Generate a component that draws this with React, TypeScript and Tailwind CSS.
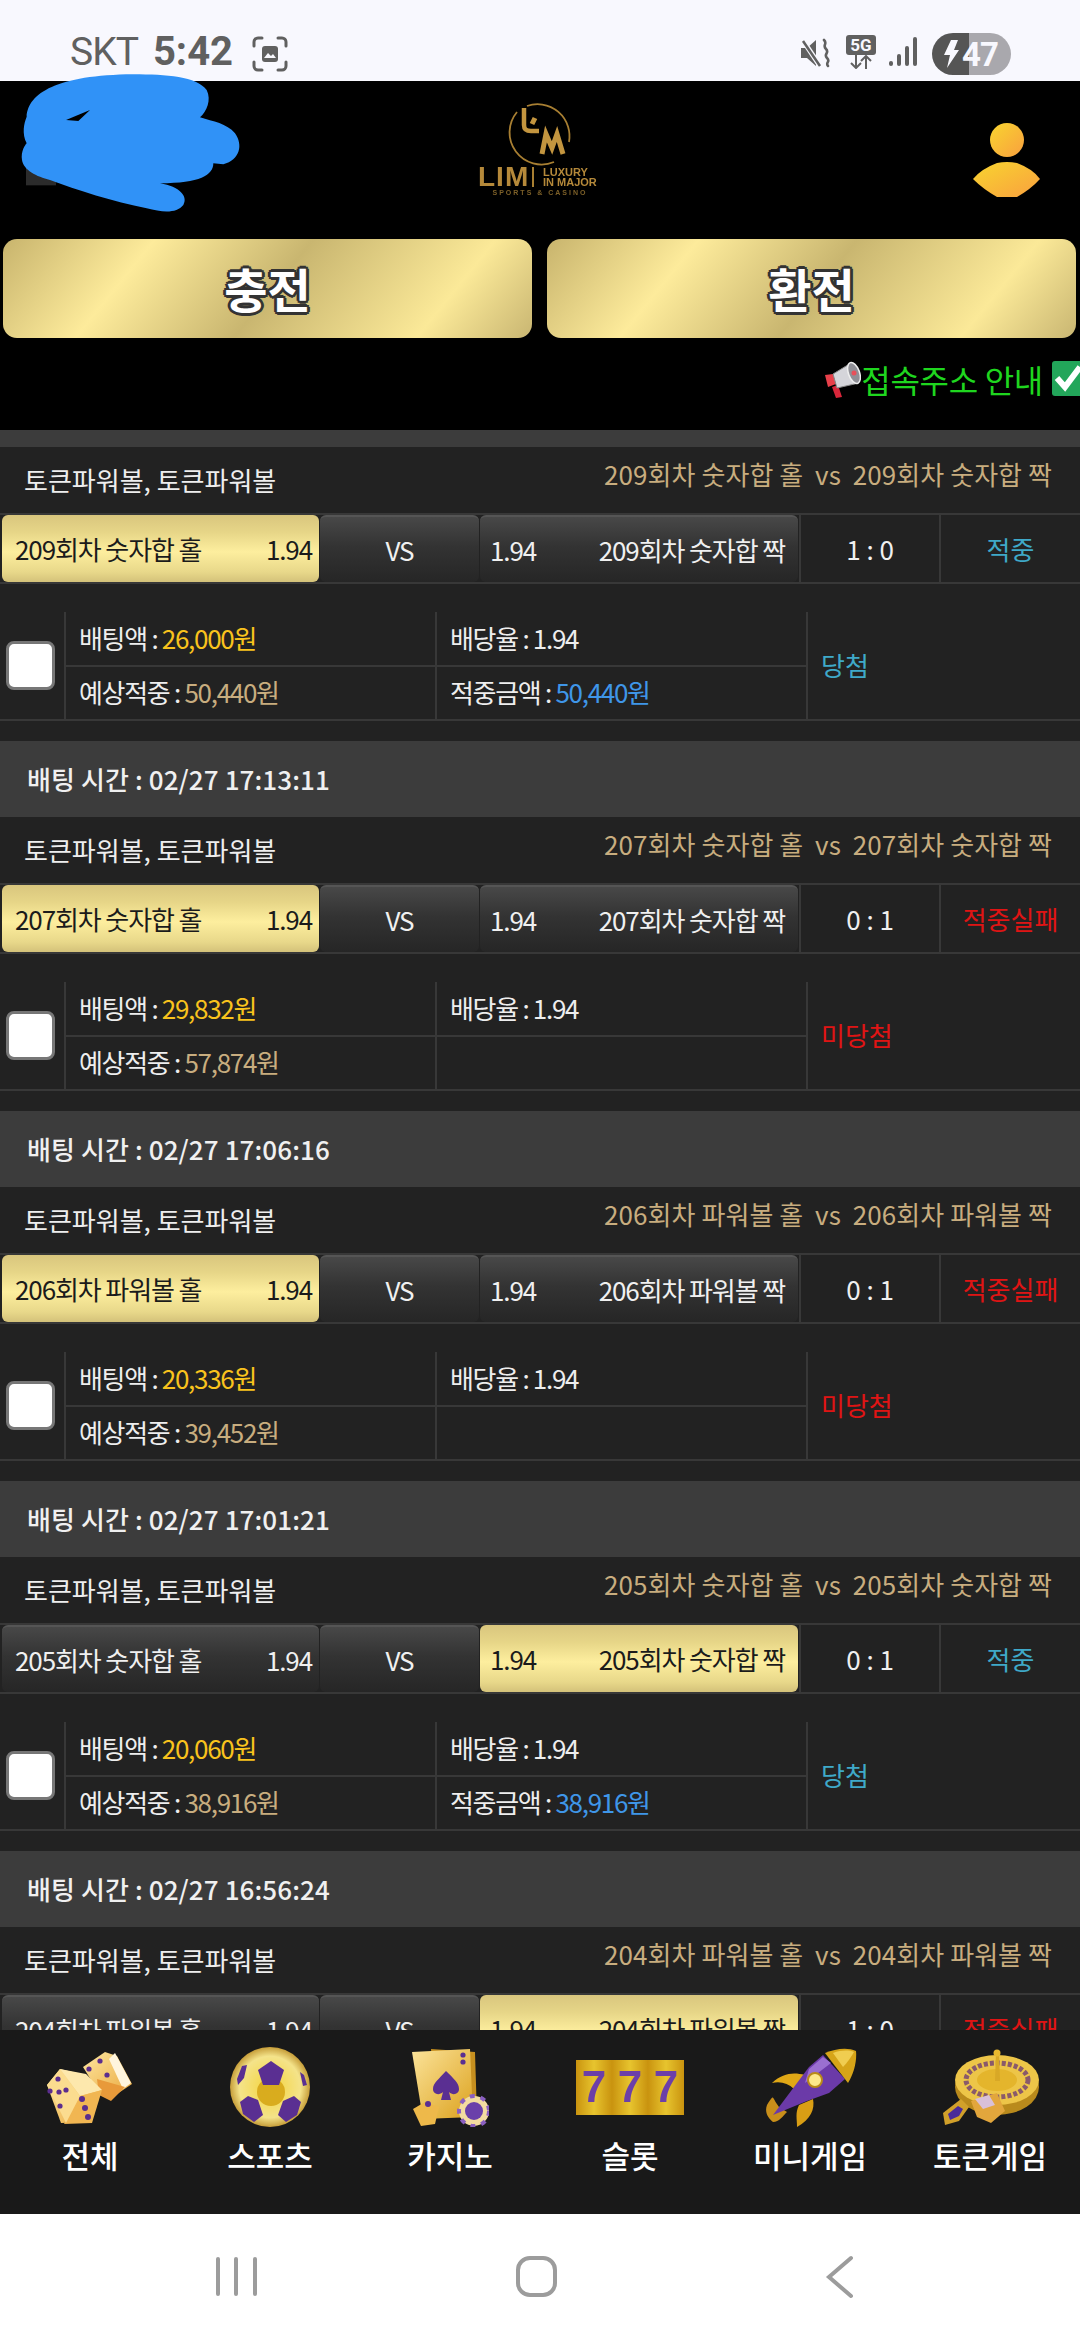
import React from "react";

type Card = {
  time?: string;
  no: number;
  kind: string;
  pick: "left" | "right";
  score: string;
  win: boolean;
  bet: string;
  exp: string;
  won?: string;
};

const cards: Card[] = [
  { no: 209, kind: "숫자합", pick: "left", score: "1 : 0", win: true, bet: "26,000원", exp: "50,440원", won: "50,440원" },
  { time: "02/27 17:13:11", no: 207, kind: "숫자합", pick: "left", score: "0 : 1", win: false, bet: "29,832원", exp: "57,874원" },
  { time: "02/27 17:06:16", no: 206, kind: "파워볼", pick: "left", score: "0 : 1", win: false, bet: "20,336원", exp: "39,452원" },
  { time: "02/27 17:01:21", no: 205, kind: "숫자합", pick: "right", score: "0 : 1", win: true, bet: "20,060원", exp: "38,916원", won: "38,916원" },
  { time: "02/27 16:56:24", no: 204, kind: "파워볼", pick: "right", score: "1 : 0", win: false, bet: "20,000원", exp: "38,800원" },
];

const gold = "bg-[linear-gradient(180deg,#d9c67e_0%,#e6d587_25%,#fdee9e_55%,#e8d88a_85%,#d4c27a_100%)] text-[#1b1b1b]";
const dark = "bg-[linear-gradient(180deg,#484848_0%,#333333_45%,#262626_100%)] border-t-2 border-[#555555] text-[#f0f0f0]";
const goldBtn = "bg-[linear-gradient(129deg,#c8b46d_0%,#fdeb9b_25%,#c9b670_51%,#fbe998_81%,#c9b672_100%)]";
const outlined = "[text-shadow:-2px_-2px_0_#333,2px_-2px_0_#333,-2px_2px_0_#333,2px_2px_0_#333,0_3px_0_#333,3px_0_0_#333,-3px_0_0_#333,0_-3px_0_#333]";

function StatusBar() {
  return (
    <div className="h-[81px] shrink-0 bg-[#f8f8fe] flex items-start pt-[24px] pl-[70px] pr-[69px] text-[#606060] font-['Roboto',sans-serif]">
      <span className="text-[39px] leading-[56px] tracking-[-1px] mr-[15px]">SKT</span>
      <span className="text-[40px] leading-[56px] font-bold mr-[19px]">5:42</span>
      <svg width="36" height="36" viewBox="0 0 36 36" className="mt-[12px]" fill="none" stroke="#606060" strokeWidth="3" strokeLinecap="round">
        <path d="M2 10V6a4 4 0 0 1 4-4h4M26 2h4a4 4 0 0 1 4 4v4M34 26v4a4 4 0 0 1-4 4h-4M10 34H6a4 4 0 0 1-4-4v-4" />
        <rect x="10" y="10" width="16" height="16" rx="3" fill="#606060" stroke="none" />
        <path d="M12 22l4-5 3 3 2-2 3 4z" fill="#f8f8fe" stroke="none" />
      </svg>
      <div className="ml-auto flex items-start">
        <svg width="30" height="30" viewBox="0 0 30 30" className="mt-[14px] mr-[16px]" fill="#606060">
          <path d="M1 10h6l9-8v26l-9-8H1z" />
          <path d="M2 1l18 27" stroke="#f8f8fe" strokeWidth="5" />
          <path d="M3 3l17 25" stroke="#606060" strokeWidth="2.5" />
          <path d="M24 2c4 4-2 5 2 9s-3 5 1 9-2 4 1 8" fill="none" stroke="#606060" strokeWidth="2.6" strokeLinecap="round" />
        </svg>
        <div className="w-[30px] mt-[11px] mr-[13px] flex flex-col items-center">
          <div className="w-[30px] h-[20px] rounded-[3px] bg-[#606060] text-[#f8f8fe] text-[17px] font-bold leading-[20px] text-center">5G</div>
          <svg width="24" height="14" viewBox="0 0 24 14" fill="none" stroke="#606060" strokeWidth="2">
            <path d="M7 0v13M2 8l5 5 5-5M17 14V1M12 6l5-5 5 5" />
          </svg>
        </div>
        <svg width="28" height="30" viewBox="0 0 28 30" className="mt-[13px] mr-[15px]" fill="#606060">
          <rect x="0" y="24" width="4" height="5" rx="2" />
          <rect x="8" y="17" width="4" height="12" rx="2" />
          <rect x="16" y="9" width="4" height="20" rx="2" />
          <rect x="24" y="0" width="4" height="29" rx="2" />
        </svg>
        <div className="w-[79px] h-[42px] mt-[9px] rounded-full overflow-hidden flex bg-[linear-gradient(90deg,#555555_0%,#555555_47%,#a9a8ad_47%,#a9a8ad_100%)] items-center">
          <svg width="16" height="28" viewBox="0 0 16 28" className="ml-[11px] mr-[3px]" fill="#f8f8fe">
            <path d="M8 0h7l-4 10h5L4 28l3-13H1z" />
          </svg>
          <span className="text-[#f8f8fe] font-bold text-[33px] leading-none tracking-[-1px]">47</span>
        </div>
      </div>
    </div>
  );
}

function Logo() {
  return (
    <div className="w-[124px] h-[108px] flex flex-col items-center text-[#b5893a] blur-[0.6px] font-['Liberation_Sans',sans-serif]">
      <svg width="70" height="68" viewBox="0 0 70 68" fill="none" className="shrink-0">
        <path d="M12 12A32 32 0 0 0 49 62" stroke="#a87f32" strokeWidth="1.8" />
        <path d="M22 6A32 32 0 0 1 64 42" stroke="#a87f32" strokeWidth="1.8" />
        <path d="M19 8v17c0 5 3 6 7 6h8" stroke="#c3953f" strokeWidth="4.5" />
        <path d="M27 24l3-6M37 54l4-20 6 14 5-14 6 20" stroke="#c3953f" strokeWidth="5" />
      </svg>
      <div className="w-full flex items-center -mt-[2px]">
        <span className="text-[28px] font-bold leading-[22px] tracking-[1px] w-[49px]">LIM</span>
        <span className="w-[2px] h-[20px] bg-[#a87f32] ml-[5px] mr-[9px]" />
        <div className="flex flex-col font-bold text-[11px] leading-[10px] whitespace-nowrap">
          <span>LUXURY</span>
          <span>IN MAJOR</span>
        </div>
      </div>
      <span className="text-[7px] font-bold leading-[10px] tracking-[2px] text-[#7d6028] whitespace-nowrap">SPORTS &amp; CASINO</span>
    </div>
  );
}

function Person() {
  return (
    <svg width="68" height="76" viewBox="0 0 68 76" className="mt-[42px]">
      <defs>
        <linearGradient id="pg" x1="0" y1="0" x2="1" y2="1">
          <stop offset="0" stopColor="#f8d52f" />
          <stop offset="1" stopColor="#f9a03f" />
        </linearGradient>
      </defs>
      <circle cx="34" cy="17" r="17" fill="url(#pg)" />
      <path d="M0 56Q8 46 24 40Q34 38 44 40Q60 46 67 56Q58 66 44 74H24Q10 66 0 56z" fill="url(#pg)" />
    </svg>
  );
}

function Header() {
  return (
    <div className="h-[349px] shrink-0 bg-black flex flex-col">
      <div className="h-[158px] grid grid-cols-[1fr_auto_1fr]">
        <div />
        <div className="pt-[19px]">
          <Logo />
        </div>
        <div className="flex justify-end items-start pr-[39px]">
          <Person />
        </div>
      </div>
      <div className="flex gap-[15px] pl-[3px] pr-[4px] h-[99px]">
        <div className={`flex-1 rounded-[14px] flex items-center justify-center text-white text-[47px] font-bold ${outlined} ${goldBtn}`}>충전</div>
        <div className={`flex-1 rounded-[14px] flex items-center justify-center text-white text-[47px] font-bold ${outlined} ${goldBtn}`}>환전</div>
      </div>
      <div className="flex items-start justify-end pt-[23px] overflow-hidden">
        <svg width="38" height="38" viewBox="0 0 38 38" className="shrink-0">
          <path d="M2 14l8-1 3 10-8 3z" fill="#e8404a" />
          <path d="M9 26l6-2 4 12-6 1z" fill="#d8263a" />
          <path d="M10 13L28 2l8 20-22 5z" fill="#d5d5da" stroke="#888" strokeWidth="1" />
          <ellipse cx="31" cy="12" rx="5.5" ry="11" transform="rotate(-20 31 12)" fill="#8f8f96" stroke="#eee" strokeWidth="1.5" />
          <circle cx="31" cy="12" r="2.5" fill="#e8505a" />
        </svg>
        <span className="text-[32px] leading-[42px] -mt-[3px] text-[#1fd61f] tracking-[-0.3px] whitespace-nowrap mr-[9px]">접속주소 안내</span>
        <svg width="28" height="35" viewBox="0 0 28 35" className="shrink-0">
          <rect x="0" y="0" width="36" height="35" rx="3" fill="#22a65a" />
          <path d="M5 17l8 9 15-20" fill="none" stroke="#fff" strokeWidth="6" />
        </svg>
      </div>
    </div>
  );
}

function Row({ c }: { c: Card }) {
  const left = `${c.no}회차 ${c.kind} 홀`;
  const right = `${c.no}회차 ${c.kind} 짝`;
  return (
    <div className="shrink-0">
      {c.time ? (
        <div className="h-[76px] bg-[#3c3c3c] pl-[27px] pb-[2px] flex items-center text-[26px] tracking-[0.1px] text-[#f0f0f0] font-medium">
          배팅 시간 : {c.time}
        </div>
      ) : (
        <div className="h-[17px] bg-[#3c3c3c]" />
      )}
      <div className="bg-[#222222]">
        <div className="h-[66px] flex justify-between items-start pl-[24px] pr-[28px] text-[26px] leading-none whitespace-pre">
          <span className="pt-[20px] text-[#eeeeee]">토큰파워볼, 토큰파워볼</span>
          <span className="pt-[14px] tracking-[0.07px] text-[#c8ad7f]">{left}  vs  {right}</span>
        </div>
        <div className="h-[71px] border-y-2 border-[#383838] flex text-[26px] tracking-[-1.1px] whitespace-nowrap">
          <div className={`ml-[2px] w-[317px] rounded-[6px] flex items-center justify-between pl-[13px] pr-[7px] ${c.pick === "left" ? gold : dark}`}>
            <span>{left}</span>
            <span>1.94</span>
          </div>
          <div className={`ml-[1px] w-[159px] rounded-[6px] flex items-center justify-center ${dark}`}>VS</div>
          <div className={`ml-[1px] w-[318px] rounded-[6px] flex items-center justify-between pl-[10px] pr-[13px] ${c.pick === "right" ? gold : dark}`}>
            <span>1.94</span>
            <span>{right}</span>
          </div>
          <div className="ml-[1px] w-[142px] border-x-2 border-[#383838] flex items-center justify-center text-[#f0f0f0] tracking-normal">{c.score}</div>
          <div className={`flex-1 flex items-center justify-center tracking-normal ${c.win ? "text-[#3fa9c9]" : "text-[#e01414]"}`}>
            {c.win ? "적중" : "적중실패"}
          </div>
        </div>
        <div className="pt-[28px] pb-[20px]">
          <div className="h-[109px] border-b-2 border-[#383838] flex text-[26px] tracking-[-1.3px] text-[#eeeeee] whitespace-nowrap">
            <div className="w-[64px] flex items-center pl-[6px]">
              <div className="w-[49px] h-[49px] rounded-[8px] bg-white border-[3px] border-[#777777]" />
            </div>
            <div className="w-[371px] border-l-2 border-[#383838] flex flex-col">
              <div className="h-[53px] pb-[2px] flex items-center pl-[13px]">
                <span>배팅액 : <span className="text-[#f9c31d]">{c.bet}</span></span>
              </div>
              <div className="flex-1 pb-[3px] border-t-2 border-[#383838] flex items-center pl-[13px]">
                <span>예상적중 : <span className="text-[#c8ad7f]">{c.exp}</span></span>
              </div>
            </div>
            <div className="w-[371px] border-l-2 border-[#383838] flex flex-col">
              <div className="h-[53px] pb-[2px] flex items-center pl-[13px]">배당율 : 1.94</div>
              <div className="flex-1 pb-[3px] border-t-2 border-[#383838] flex items-center pl-[13px]">
                {c.won && (
                  <span>적중금액 : <span className="text-[#3f96e8]">{c.won}</span></span>
                )}
              </div>
            </div>
            <div className={`flex-1 pb-[2px] border-l-2 border-[#383838] flex items-center pl-[13px] tracking-normal ${c.win ? "text-[#3fa9c9]" : "text-[#e01414]"}`}>
              {c.win ? "당첨" : "미당첨"}
            </div>
          </div>
        </div>
      </div>
    </div>
  );
}

function Dice() {
  const dot = "#5b2d8e";
  return (
    <svg width="90" height="76" viewBox="0 0 90 76" className="blur-[0.6px]">
      <defs>
        <linearGradient id="d1" x1="0" y1="0" x2="1" y2="1">
          <stop offset="0" stopColor="#fde7a0" />
          <stop offset="1" stopColor="#eaa93f" />
        </linearGradient>
      </defs>
      <path d="M38 18L60 3l12 4 15 28-18 12-18-8z" fill="url(#d1)" />
      <path d="M70 4l16 30-8 6-14-30z" fill="#fff5dd" />
      <path d="M52 30l28 8-14 14-12-6z" fill="#e89a3a" />
      <circle cx="55" cy="12" r="2.6" fill={dot} /><circle cx="44" cy="20" r="2.6" fill={dot} /><circle cx="62" cy="26" r="2.6" fill={dot} />
      <path d="M2 36L15 20l25 6 16 16-10 31-30 1z" fill="url(#d1)" />
      <path d="M15 20l26 5 16 16-22 6z" fill="#fde8ad" />
      <path d="M35 47l22-6-10 33-28 1z" fill="#f1b652" />
      <path d="M2 36L15 20l20 27-14 27z" fill="#fbdc8f" />
      <circle cx="13" cy="30" r="2.6" fill={dot} /><circle cx="5" cy="42" r="2.6" fill={dot} /><circle cx="14" cy="43" r="2.6" fill={dot} />
      <circle cx="21" cy="41" r="2.6" fill={dot} /><circle cx="15" cy="57" r="2.6" fill={dot} />
      <circle cx="37" cy="50" r="3" fill={dot} /><circle cx="40" cy="59" r="3" fill={dot} /><circle cx="43" cy="68" r="3" fill={dot} />
    </svg>
  );
}

function Ball() {
  const p = "#5a2f92";
  return (
    <svg width="82" height="82" viewBox="0 0 82 82" className="blur-[0.5px]">
      <defs>
        <radialGradient id="b1" cx="0.5" cy="0.5" r="0.55">
          <stop offset="0" stopColor="#f4d43a" />
          <stop offset="0.7" stopColor="#f4e38a" />
          <stop offset="1" stopColor="#b27f16" />
        </radialGradient>
      </defs>
      <circle cx="41" cy="41" r="40" fill="url(#b1)" />
      <circle cx="42" cy="46" r="14" fill="#d9ac1e" />
      <path d="M42 15l13 9-5 15H34l-5-15z" fill={p} />
      <path d="M19 50l10 4 5 15-9 7-11-8-3-12z" fill={p} />
      <path d="M65 50l-11 5-5 14 8 7 11-7 4-13z" fill={p} />
      <path d="M13 20l-5 13 1 6 6-7 3-13z" fill={p} />
      <path d="M71 26l3 14 4-1-3-10z" fill={p} />
    </svg>
  );
}

function Cards() {
  return (
    <svg width="78" height="80" viewBox="0 0 78 80" className="blur-[0.5px]">
      <defs>
        <linearGradient id="c1" x1="0" y1="0" x2="1" y2="1">
          <stop offset="0" stopColor="#fbe39a" />
          <stop offset="1" stopColor="#dca21e" />
        </linearGradient>
      </defs>
      <path d="M20 2l44 3 2 65-40-2z" fill="#c68f1f" />
      <path d="M1 5l58-3 3 68-50 2z" fill="url(#c1)" />
      <path d="M35 24c8 8 13 12 13 18 0 5-6 7-10 3l2 8h-10l2-8c-4 4-10 2-10-3 0-6 6-10 13-18z" fill="#5a2f92" />
      <circle cx="52" cy="8" r="2.6" fill="#5a2f92" /><circle cx="52" cy="15" r="2.6" fill="#5a2f92" />
      <path d="M2 62l12-7 14 5-4 17-14 2z" fill="#eeb94a" />
      <circle cx="17" cy="57" r="3" fill="#5a2f92" />
      <circle cx="63" cy="64" r="15" fill="#f3dca0" />
      <circle cx="63" cy="64" r="15" fill="none" stroke="#8a5fc0" strokeWidth="4" strokeDasharray="5 6" />
      <circle cx="63" cy="64" r="9" fill="#6a40aa" />
    </svg>
  );
}

function Slots() {
  const cell = "w-[36px] h-[55px] flex items-center justify-center text-[#6c3fa8] text-[44px] font-bold leading-none font-['Liberation_Sans',sans-serif] bg-[linear-gradient(90deg,#c9930f_0%,#e7c42e_50%,#c9930f_100%)]";
  return (
    <div className="flex blur-[0.3px]">
      <div className={cell}>7</div>
      <div className={cell}>7</div>
      <div className={cell}>7</div>
    </div>
  );
}

function Rocket() {
  return (
    <svg width="94" height="80" viewBox="0 0 94 80" className="blur-[0.5px]">
      <path d="M42 28C30 25 20 26 9 36c8-2 16 0 22 6z" fill="#e0a816" />
      <path d="M50 52c2 10-2 20-16 28 0-8-2-14 2-22z" fill="#d99e14" />
      <path d="M16 60C8 50 12 46 4 58c-3 8 2 14 6 17 6 0 10-6 14-10z" fill="#c98f1a" />
      <path d="M10 68L46 20 60 8l22 24-16 14-22 8z" fill="#6b3aa8" />
      <path d="M46 22L60 10l8 6-26 20z" fill="#9a6fd0" />
      <path d="M62 6C72 2 84 0 93 4c1 10-2 22-8 32z" fill="#d6a418" />
      <path d="M70 6C78 3 86 3 91 5 88 10 84 16 80 20z" fill="#f0cd50" />
      <circle cx="52" cy="33" r="7" fill="#fde88a" stroke="#b98a18" strokeWidth="2" />
    </svg>
  );
}

function Roulette() {
  return (
    <svg width="98" height="76" viewBox="0 0 98 76" className="blur-[0.5px]">
      <ellipse cx="56" cy="38" rx="42" ry="28" fill="#b98a1c" />
      <ellipse cx="56" cy="31" rx="42" ry="25" fill="#edc548" />
      <ellipse cx="56" cy="31" rx="31" ry="17" fill="none" stroke="#8a5a6a" strokeWidth="5" strokeDasharray="4 2" />
      <ellipse cx="56" cy="31" rx="20" ry="11" fill="#e4b52c" />
      <path d="M54 32L55 3h3l1 29z" fill="#d8a826" />
      <circle cx="56" cy="4" r="3.5" fill="#e8b92f" />
      <path d="M30 52l26-8 8 18-14 12-14-6z" fill="#e2a63c" />
      <path d="M34 50l14-4 6 10-12 4z" fill="#d9c0d8" />
      <path d="M20 50L2 64 4 76l14-4 10-14z" fill="#d1a02a" />
      <path d="M17 57L7 65l2 6 9-4 4-7z" fill="#4a2a9a" />
    </svg>
  );
}

const nav: { label: string; icon: React.ReactNode }[] = [
  { label: "전체", icon: <Dice /> },
  { label: "스포츠", icon: <Ball /> },
  { label: "카지노", icon: <Cards /> },
  { label: "슬롯", icon: <Slots /> },
  { label: "미니게임", icon: <Rocket /> },
  { label: "토큰게임", icon: <Roulette /> },
];

function BottomNav() {
  return (
    <div className="h-[184px] shrink-0 bg-[#191919] grid grid-cols-6">
      {nav.map((n) => (
        <div key={n.label} className="flex flex-col items-center pt-[15px]">
          <div className="h-[84px] flex items-center justify-center">{n.icon}</div>
          <span className="mt-[6px] text-[31px] leading-[40px] font-medium text-white whitespace-nowrap">{n.label}</span>
        </div>
      ))}
    </div>
  );
}

function SystemNav() {
  return (
    <div className="h-[126px] shrink-0 bg-white flex pt-[43px] justify-center">
      <div className="w-[41px] h-[39px] ml-[-10px] flex justify-between">
        <span className="w-[4px] h-full rounded-full bg-[#9c9c9c]" />
        <span className="w-[4px] h-full rounded-full bg-[#9c9c9c]" />
        <span className="w-[4px] h-full rounded-full bg-[#9c9c9c]" />
      </div>
      <div className="w-[41px] h-[41px] ml-[259px] -mt-[1px] rounded-[14px] border-[4px] border-[#9c9c9c]" />
      <svg width="30" height="44" viewBox="0 0 30 44" className="ml-[268px] -mt-[2px]" fill="none" stroke="#9c9c9c" strokeWidth="4" strokeLinecap="round">
        <path d="M26 3L4 22l22 19" />
      </svg>
    </div>
  );
}

export default function App() {
  return (
    <div className="relative w-[1080px] h-[2340px] overflow-hidden flex flex-col bg-[#222222] font-['Noto_Sans_CJK_KR','Noto_Sans',sans-serif]">
      <StatusBar />
      <Header />
      <div className="flex-1 min-h-0 overflow-hidden flex flex-col">
        {cards.map((c) => (
          <Row key={c.no} c={c} />
        ))}
      </div>
      <BottomNav />
      <SystemNav />
      <svg width="300" height="200" viewBox="0 0 900 600" className="absolute left-0 top-[20px]">
        <rect x="78" y="430" width="90" height="66" fill="#2b2b2b" />
        <path
          fill="#3092f7"
          fillRule="evenodd"
          d="M80 290C85 220 170 165 400 163C500 163 590 170 620 210C635 240 620 275 600 292C640 305 680 310 705 340C730 375 720 420 670 433L640 430C640 465 600 490 480 490C540 500 565 530 550 555C530 580 490 578 440 565C340 545 230 510 150 480C110 470 70 450 66 420C62 395 75 375 80 370C65 340 72 310 80 290ZM198 300L270 270L235 303Z"
        />
      </svg>
    </div>
  );
}
